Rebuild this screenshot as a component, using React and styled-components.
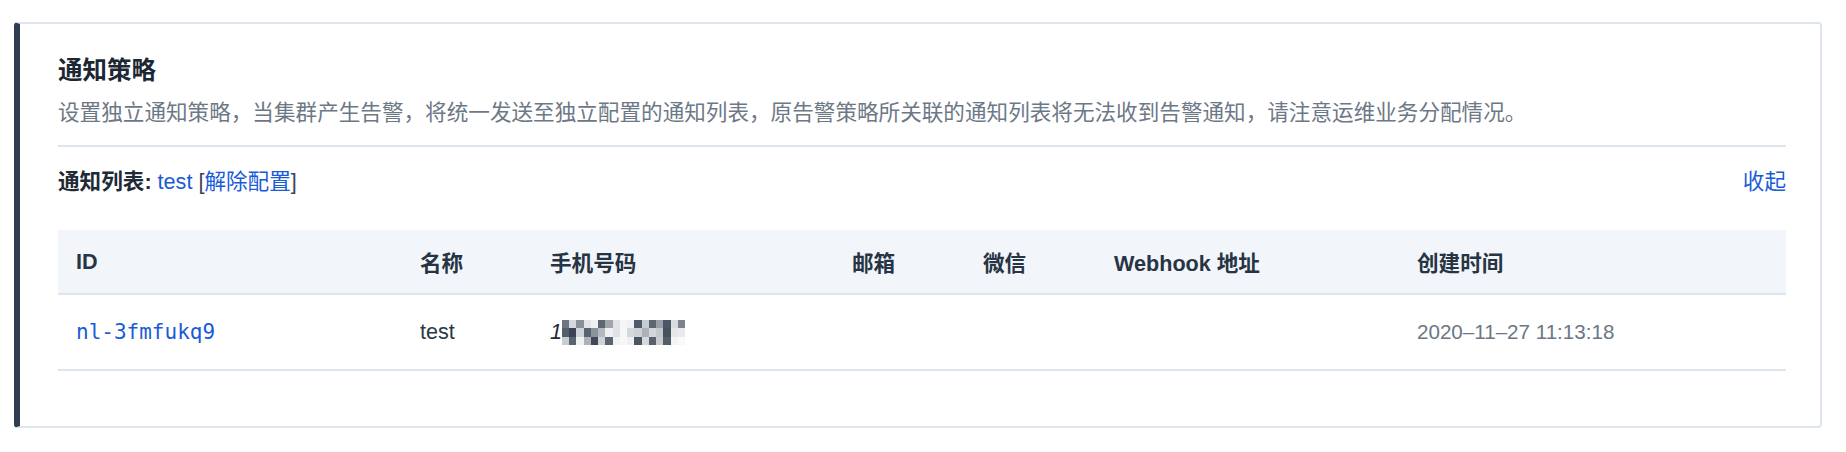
import React from "react";
import styled, { createGlobalStyle } from "styled-components";

const GlobalStyle = createGlobalStyle`
  html, body {
    margin: 0;
    padding: 0;
    background: #fff;
  }
  body {
    font-family: "Liberation Sans", "Noto Sans CJK SC", sans-serif;
    font-size: 21.6px;
    color: #2b3848;
  }
`;

const Page = styled.div`
  padding: 22px 24px 24px 14px;
`;

const Card = styled.section`
  border: 2px solid #dfe5ec;
  border-left: 6px solid #2e3d4f;
  border-radius: 4px;
  padding: 30px 34px 55px 38px;
`;

const Title = styled.h3`
  margin: 0;
  font-size: 24.5px;
  line-height: 34px;
  font-weight: 700;
  color: #1c2734;
`;

const Desc = styled.p`
  margin: 10px 0 0;
  line-height: 30px;
  color: #6d7886;
`;

const Divider = styled.hr`
  margin: 17px 0 0;
  border: 0;
  border-top: 2px solid #dfe5ec;
`;

const ListBar = styled.div`
  margin-top: 20px;
  display: flex;
  justify-content: space-between;
  align-items: center;
  line-height: 30px;
`;

const Label = styled.b`
  font-weight: 700;
  color: #1f2a37;
`;

const Link = styled.a`
  color: #1a5bd6;
  text-decoration: none;
  cursor: pointer;
`;

const Bracket = styled.span`
  color: #3a4656;
`;

const Table = styled.div`
  margin-top: 33px;
`;

const Row = styled.div`
  display: grid;
  grid-template-columns: 344px 130px 302px 131px 131px 303px 1fr;
  align-items: center;
  height: ${(p) => (p.$head ? "63px" : "74px")};
  background: ${(p) => (p.$head ? "#f2f5f9" : "#fff")};
  border-bottom: 2px solid #dfe5ec;
  font-weight: ${(p) => (p.$head ? 600 : 400)};
  color: ${(p) => (p.$head ? "#263444" : "#2b3848")};
`;

const Cell = styled.div`
  padding-left: 18px;
  white-space: nowrap;
  color: ${(p) => p.$color || "inherit"};
  font-size: ${(p) => p.$size || "inherit"};
`;

const MonoLink = styled(Link)`
  font-family: "DejaVu Sans Mono", "Liberation Mono", monospace;
  font-size: 21px;
`;

const Phone = styled.span`
  display: inline-flex;
  align-items: center;
`;

const Digits = styled.span`
  font-style: italic;
  color: #1f2a37;
`;

const Mosaic = styled.svg`
  margin-left: -12px;
  display: block;
`;

const mosaic = [
  ["#6e7682", "#d5d8dc", "#8a9098", "#e2e4e7", "#eef0f2", "#5d6673", "#a0a5ad", "#e0e2e5", "#f4f5f7", "#f0f1f3", "#4f5968", "#c8ccd1", "#5c6572", "#9aa0a8", "#4c5664", "#d8dbdf", "#7c838d"],
  ["#555e6b", "#3a4454", "#d0d3d8", "#59626f", "#8d939b", "#b5b9bf", "#eef0f2", "#dfe1e4", "#f5f6f7", "#d4d7db", "#cdd0d5", "#aeb2b8", "#d3d6da", "#c4c8cd", "#48525f", "#e4e6e9", "#e8eaec"],
  ["#c9ccd1", "#5a6370", "#f0f1f3", "#b0b4ba", "#3e4856", "#cfd2d6", "#5b6471", "#f2f3f5", "#f6f7f8", "#eff0f2", "#4a5462", "#d6d9dc", "#58616e", "#c9cdd1", "#535c69", "#f3f4f5", "#f8f9fa"],
];

const MaskedPhone = () => (
  <Phone>
    <Digits>18</Digits>
    <Mosaic width="123" height="25" viewBox="0 0 17 3" preserveAspectRatio="none" shapeRendering="crispEdges">
      {mosaic.map((row, y) =>
        row.map((c, x) => <rect key={`${x}-${y}`} x={x} y={y} width="1" height="1" fill={c} />)
      )}
    </Mosaic>
  </Phone>
);

const columns = ["ID", "名称", "手机号码", "邮箱", "微信", "Webhook 地址", "创建时间"];

const App = () => {
  return (
    <Page>
      <GlobalStyle />
      <Card>
        <Title>通知策略</Title>
        <Desc>
          设置独立通知策略，当集群产生告警，将统一发送至独立配置的通知列表，原告警策略所关联的通知列表将无法收到告警通知，请注意运维业务分配情况。
        </Desc>
        <Divider />
        <ListBar>
          <span>
            <Label>通知列表: </Label>
            <Link>test</Link> <Bracket>[</Bracket>
            <Link>解除配置</Link>
            <Bracket>]</Bracket>
          </span>
          <Link>收起</Link>
        </ListBar>
        <Table>
          <Row $head>
            {columns.map((c) => (
              <Cell key={c}>{c}</Cell>
            ))}
          </Row>
          <Row>
            <Cell>
              <MonoLink>nl-3fmfukq9</MonoLink>
            </Cell>
            <Cell>test</Cell>
            <Cell>
              <MaskedPhone />
            </Cell>
            <Cell />
            <Cell />
            <Cell />
            <Cell $color="#6b7785" $size="20.6px">2020–11–27 11:13:18</Cell>
          </Row>
        </Table>
      </Card>
    </Page>
  );
};

export default App;
